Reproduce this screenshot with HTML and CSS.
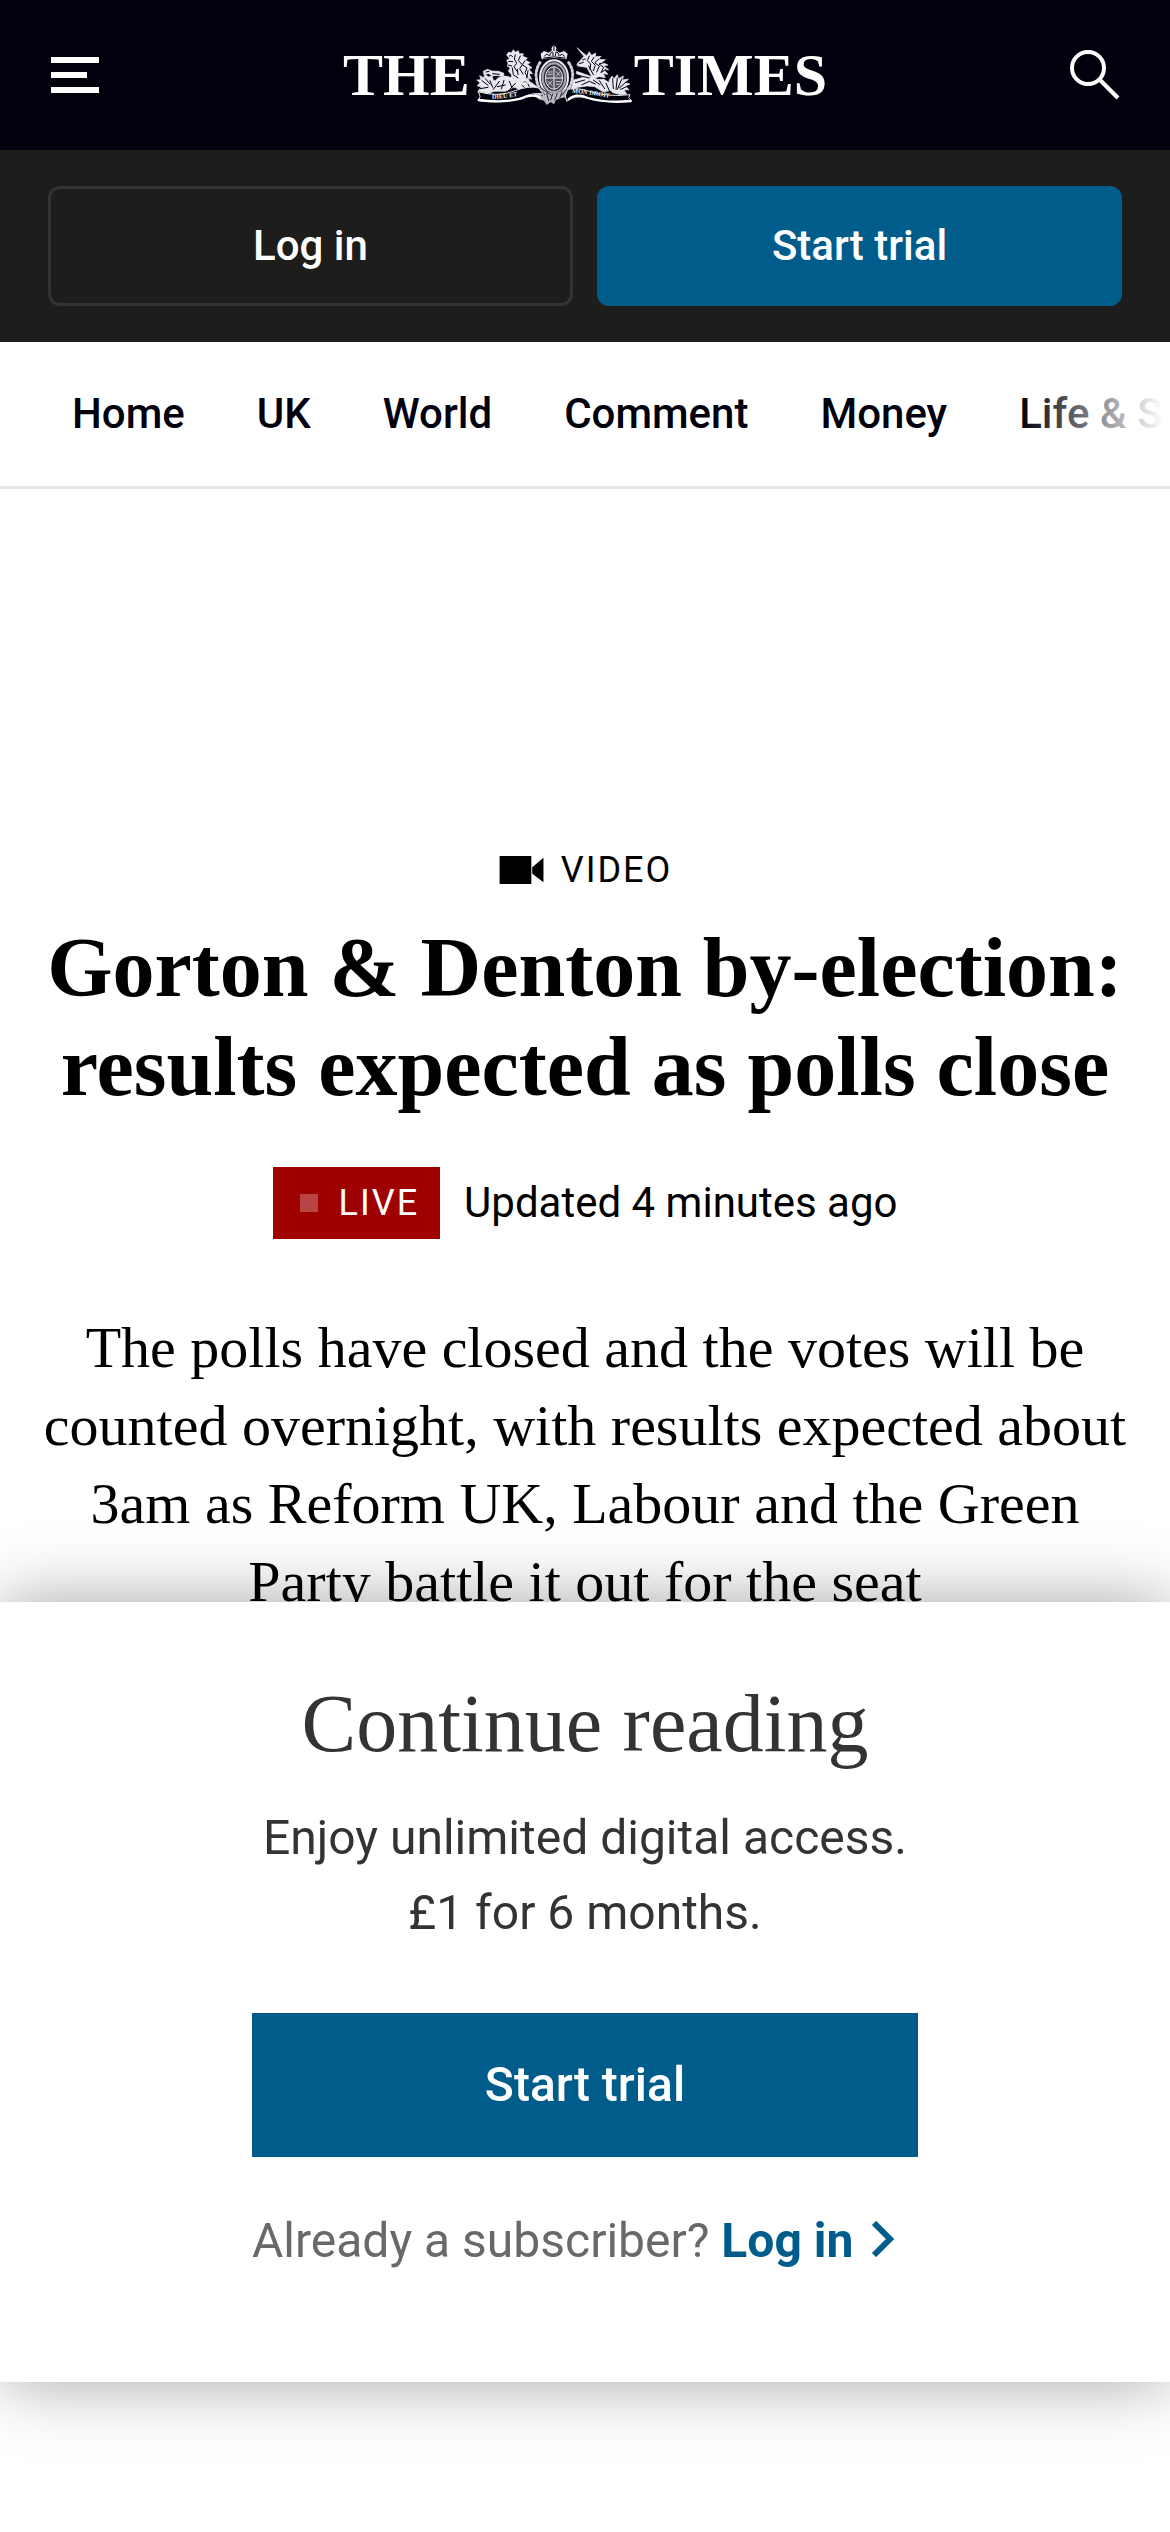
FILE: index.html
```html
<!DOCTYPE html>
<html lang="en">
<head>
<meta charset="utf-8">
<meta name="viewport" content="width=device-width, initial-scale=1">
<title>Gorton &amp; Denton by-election: results expected as polls close</title>
<link rel="stylesheet" href="styles.css">
</head>
<body>
<header class="masthead">
  <button class="icon-button" type="button" aria-label="Menu">
    <svg width="48" height="36" viewBox="0 0 48 36" fill="#fff"><path d="M0 0h48v6H0zM0 15h36v6H0zM0 30h48v6H0z"/></svg>
  </button>
  <a class="logo" href="#" aria-label="The Times">
    <span>THE</span>
    <svg class="crest" viewBox="34 40 474 186" fill="none" stroke-linecap="round" stroke-linejoin="round">
      <!-- lion -->
      <g fill="#e9e9ef" stroke="#e9e9ef" stroke-width="2">
        <path d="M126 72l6-8 8 3 6-10 6 8 9-5 3 9 12 0-2 8 14 5-6 6 15 8-9 4 14 12-10 2 12 15-11 0 8 17-10-3 4 13-14-5-16 8-14-12-14 4 4-18-10-12 6-10-9-4 2-10-4-8 8-5z"/>
        <path d="M100 142q24-14 46 4l26 10 26-2 16 12-4 16-36 0-24-12-28 12-34 0-16-12z"/>
        <path d="M40 182l10-14-12-2 8-10-10-8 13-1-4-12 12 6 4-12 10 10 12-4 2 12 16 10-8 22-20 10z"/>
        <path d="M56 122l12-6 14 5 20 1 16 6-2 9-18-2-16 0-10-6-14 2z"/>
      </g>
      <g stroke="#01000d" stroke-width="3">
        <path d="M134 76q6-6 10 2M132 92l12 1M131 103l10 3M152 72l-3 13 7 13-8 10 9 14M167 76l-6 14 12 12-8 12 10 16M181 90l-8 12 14 10-6 14 8 14M158 116l2 16M143 112l3 20 14 10M190 120l-4 22M64 124l9-2M84 129l20 2M52 150l18 14M62 144l14 16M46 174l24-4M76 150l8 20M104 152l-18 24M118 149l-8 26M134 152l10 24M152 158l-20 22M172 164l16 14M190 160l8 18M98 168l24-5"/>
      </g>
      <!-- unicorn -->
      <g fill="#e9e9ef" stroke="#e9e9ef" stroke-width="2">
        <path d="M338 52l26 22-5 4z"/>
        <path d="M337 100l20-22 12-6 4-9 8 11 12-7-1 11 17-1-7 9 20 1-10 8 18 8-13 3 15 11-14 1 12 13-14-2 6 12-18-3-20 6-10-20-8-14-14-2-12-2z"/>
        <path d="M326 148l30-8-22-12 2-6 34 12 28 12 20 0 18 12 10 20-30 6-26-16-22-2-28 4-20 8z"/>
        <path d="M434 148l8-12 6 8 10-12 4 12 14-8-2 12 17-3-9 11 14 4-13 7 10 10-15 1 8 12-18 2-24-6-12-14z"/>
      </g>
      <g stroke="#01000d" stroke-width="3">
        <path d="M354 88l8-3M344 99l12-4M374 76l-6 14 10 10-2 16M388 80l-8 12 12 12-6 16M402 86l-12 10 14 10-8 18M417 96l-14 4 14 10-8 16M424 116l-12 8M372 106l14 26M340 134l34 8M332 156l28-8M352 162l22-10 18 8M386 148l20 14M404 150l16 24M424 158l10 22M444 144l2 30M458 142l-4 34M472 144l-14 32M486 152l-22 20M490 166l-22 10"/>
      </g>
      <!-- crown and garter -->
      <path d="M231 86l-3-17 10-8 14 5 10-7-2-6 5-8 6 0 5 8-3 6 12 7 13-5 11 8-4 17q-37-8-74 0z" fill="#e9e9ef"/>
      <path d="M240 76q6-11 13-1M255 75q5-16 10-9l0 9M272 75l2-11q8 0 9 11M286 75q8-10 13 2M237 82q31-7 64 0M268 47v13" stroke="#01000d" stroke-width="3"/>
      <path d="M226 96q-10 14-12 36 2 30 12 44M312 96q12 16 12 38-2 28-14 42" stroke="#d0d0d8" stroke-width="9" stroke-dasharray="5 7"/>
      <ellipse cx="268" cy="141" rx="42" ry="52" fill="#24232e" stroke="#e9e9ef" stroke-width="6"/>
      <ellipse cx="268" cy="141" rx="34" ry="43" stroke="#a5a5ad" stroke-width="7" stroke-dasharray="3 4"/>
      <ellipse cx="268" cy="142" rx="26" ry="34" fill="#55555e" stroke="#e9e9ef" stroke-width="3"/>
      <path d="M268 110v64M244 142h48" stroke="#e9e9ef" stroke-width="3"/>
      <path d="M250 124h13M250 131h13M275 123l12 13M286 123l-11 13M250 152l12 12M262 151l-12 13M275 153h12M275 161h9" stroke="#c4c4cc" stroke-width="3"/>
      <path d="M212 164q8 0 18 12l18 8 20 4 20-5 22-14 6 8-10 22-18 4-14 5-6 13-10-7-12 9-8-13-16-4-14-14z" fill="#b9b9c2"/>
      <path d="M222 174l18 18M235 184l-4 12M246 188l6 22M264 190l-6 18M278 188l-8 20M292 184l-6 16M306 176l-14 18M232 174l28 20" stroke="#24232e" stroke-width="3"/>
      <!-- ribbons -->
      <path d="M42 184q60 16 110-4 40-16 70-8l14 18q-34-6-66 12-58 18-128 8l4-12z" fill="#01000d" stroke="#e9e9ef" stroke-width="3"/>
      <path d="M310 176q30-6 64 6 54 18 122 10l-4 9 8 9q-78 10-134-8-36-10-60 10l-4-16z" fill="#01000d" stroke="#e9e9ef" stroke-width="3"/>
      <path d="M42 208q70 10 126-4 34-16 58-4M312 206q22-20 58-4 56 16 128 9" stroke="#fff" stroke-width="7"/>
      <path id="motto-left" d="M82 204q62 0 124-22"/>
      <path id="motto-right" d="M322 187q58 2 138 20"/>
      <g class="motto"><text><textPath href="#motto-left">DIEU ET</textPath></text><text><textPath href="#motto-right">MON DROIT</textPath></text></g>
    </svg>
    <span>TIMES</span>
  </a>
  <button class="icon-button" type="button" aria-label="Search">
    <svg width="50" height="50" viewBox="0 0 50 50" fill="none" stroke="#fff" stroke-width="4"><circle cx="18" cy="18" r="16"/><path d="M29 29l19 19"/></svg>
  </button>
</header>
<div class="account-bar">
  <a class="account-button outline" href="#">Log in</a>
  <a class="account-button solid" href="#">Start trial</a>
</div>
<nav class="sections" aria-label="Sections">
  <a href="#">Home</a>
  <a href="#">UK</a>
  <a href="#">World</a>
  <a href="#">Comment</a>
  <a href="#">Money</a>
  <a href="#">Life &amp; Style</a>
</nav>
<main class="article">
  <p class="kicker">
    <svg width="48" height="30" viewBox="0 0 48 30"><path d="M0 0h34v30H0zM35 12l12-10v26L35 19z"/></svg>
    <span>VIDEO</span>
  </p>
  <h1>Gorton &amp; Denton by-election: results expected as polls close</h1>
  <div class="status">
    <span class="live"><i class="pulse"></i>LIVE</span>
    <span>Updated 4 minutes ago</span>
  </div>
  <p class="standfirst">The polls have closed and the votes will be counted overnight, with results expected about 3am as Reform UK, Labour and the Green Party battle it out for the seat</p>
</main>
<section class="paywall" aria-labelledby="paywall-title">
  <h2 id="paywall-title">Continue reading</h2>
  <p class="offer">Enjoy unlimited digital access.<br>£1 for 6 months.</p>
  <div class="actions">
    <button class="trial" type="button">Start trial</button>
    <p class="subscriber">Already a subscriber? <a href="#">Log in<svg width="24" height="36" viewBox="0 0 24 36" fill="none" stroke="currentColor" stroke-width="6"><path d="M3 2l16 16L3 34"/></svg></a></p>
  </div>
</section>
</body>
</html>
```
FILE: styles.css
```css
* { box-sizing: border-box; }

body {
  margin: 0;
  background: #fff;
  color: #000;
  font-family: Roboto, "Liberation Sans", sans-serif;
  font-size: 42px;
  line-height: 48px;
}

a { color: inherit; text-decoration: none; }
h1, h2, p { margin: 0; }

button {
  border: 0;
  padding: 0;
  font: inherit;
  cursor: pointer;
}

svg { display: block; flex: none; }

.masthead {
  display: flex;
  align-items: center;
  justify-content: space-between;
  height: 150px;
  padding: 0 48px;
  background: #01000d;
}

.icon-button {
  display: flex;
  justify-content: center;
  width: 54px;
  background: none;
}

.logo {
  display: flex;
  align-items: center;
  color: #fff;
  font-family: "Liberation Serif", serif;
  font-size: 60px;
  font-weight: 700;
  line-height: 66px;
}

.crest {
  width: 158px;
  height: 62px;
  margin-left: 6px;
}

.motto {
  fill: #fff;
  font-size: 19px;
  font-weight: 700;
}

.account-bar {
  display: flex;
  gap: 24px;
  padding: 36px 48px;
  background: #1d1d1b;
}

.account-button {
  display: flex;
  flex: 1;
  align-items: center;
  justify-content: center;
  height: 120px;
  border: 3px solid #005c8a;
  border-radius: 12px;
  color: #fff;
  font-weight: 500;
}

.outline { border-color: #333; }
.solid { background: #005c8a; }

.sections {
  position: relative;
  display: flex;
  gap: 72px;
  overflow: hidden;
  padding: 48px 72px;
  border-bottom: 3px solid #e4e4e4;
  color: #01000d;
  font-weight: 500;
  white-space: nowrap;
}

.sections::after {
  content: "";
  position: absolute;
  inset: 0 0 0 auto;
  width: 150px;
  background: linear-gradient(to right, rgba(255, 255, 255, 0), #fff 96%);
}

.article {
  padding: 357px 36px 0;
  text-align: center;
}

.kicker {
  display: flex;
  align-items: center;
  justify-content: center;
  gap: 15px;
  font-size: 36px;
  letter-spacing: 2px;
}

.kicker svg { height: 28px; }

h1 {
  margin-top: 24px;
  font-family: "Liberation Serif", serif;
  font-size: 84px;
  font-weight: 700;
  line-height: 99px;
}

.status {
  display: flex;
  align-items: center;
  justify-content: center;
  gap: 24px;
  margin-top: 51px;
}

.live {
  display: flex;
  align-items: center;
  gap: 21px;
  height: 72px;
  padding: 0 21px 0 27px;
  background: #9f0000;
  color: #fff;
  font-size: 36px;
  letter-spacing: 2px;
}

.pulse {
  width: 18px;
  height: 18px;
  background: #b94444;
}

.standfirst {
  margin-top: 70px;
  font-family: "Liberation Serif", serif;
  font-size: 58px;
  line-height: 78px;
}

.paywall {
  position: fixed;
  right: 0;
  bottom: 150px;
  left: 0;
  display: flex;
  flex-direction: column;
  align-items: center;
  padding: 72px 36px 105px;
  background: #fff;
  box-shadow: 0 0 66px rgba(0, 0, 0, .36);
  color: #333;
  text-align: center;
  font-size: 48px;
}

h2 {
  font-family: "Liberation Serif", serif;
  font-size: 82px;
  font-weight: 400;
  line-height: 99px;
}

.offer { margin-top: 27px; line-height: 75px; }

.actions { width: 666px; margin-top: 63px; }

.trial {
  width: 100%;
  height: 144px;
  background: #005c8a;
  color: #fff;
  font-weight: 500;
}

.subscriber {
  margin-top: 48px;
  color: #696969;
  line-height: 72px;
  text-align: left;
}

.subscriber a { color: #005c8a; font-weight: 700; }
.subscriber svg { display: inline-block; margin-left: 18px; }
```
